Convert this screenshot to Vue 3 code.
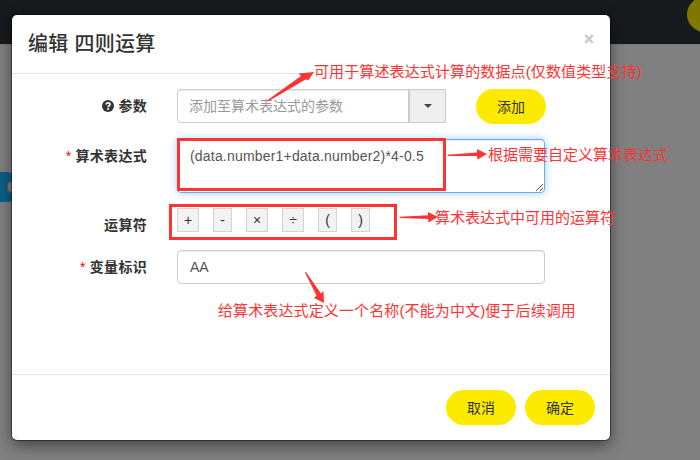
<script setup>
import { ref } from 'vue'

const expression = ref('(data.number1+data.number2)*4-0.5')
const identifier = ref('AA')
const operators = ['+', '-', '×', '÷', '(', ')']
</script>

<template>
  <div class="screen">
    <div class="topbar"><span class="round-action"></span></div>
    <div class="side-tab"><span class="side-hole"></span></div>

    <section class="modal">
      <header class="modal-header">
        <h4>编辑 四则运算</h4>
        <button class="close" aria-label="关闭">
          <svg width="10" height="10" viewBox="0 0 10 10"><path d="M1.2 1.2 8.8 8.8M8.8 1.2 1.2 8.8" /></svg>
        </button>
      </header>

      <div class="modal-body">
        <div class="row row-param">
          <label>
            <svg class="help" width="12" height="12" viewBox="0 0 12 12">
              <circle cx="6" cy="6" r="6" fill="#333" />
              <path d="M4 4.5C4.2 2.3 8 2.2 8 4.4 8 5.8 6.1 5.7 6.1 7.2" fill="none" stroke="#fff" stroke-width="1.7" />
              <rect x="5.2" y="8.2" width="1.8" height="1.7" fill="#fff" />
            </svg>参数
          </label>
          <div class="combo">
            <div class="combo-text">添加至算术表达式的参数</div>
            <button class="combo-toggle"><span class="caret"></span></button>
          </div>
          <button class="pill">添加</button>
        </div>

        <div class="row row-expr">
          <label><i>*</i>算术表达式</label>
          <div class="field area">
            {{ expression }}
            <svg class="grip" width="9" height="9" viewBox="0 0 9 9"><path d="M1 8 8 1M5 8 8 5" /></svg>
          </div>
        </div>

        <div class="row row-ops">
          <label>运算符</label>
          <div class="ops">
            <button v-for="op in operators" :key="op" :class="{ narrow: '-()'.includes(op) }">{{ op }}</button>
          </div>
        </div>

        <div class="row row-id">
          <label><i>*</i>变量标识</label>
          <div class="field">{{ identifier }}</div>
        </div>
      </div>

      <footer class="modal-footer">
        <button class="pill">取消</button>
        <button class="pill">确定</button>
      </footer>
    </section>

    <div class="mark mark-expr"></div>
    <div class="mark mark-ops"></div>
    <svg class="arrows" width="700" height="460" viewBox="0 0 700 460">
      <path d="M267 100.5 301 76 298.5 73.5 314 72 308.5 80 305.5 79.5 268 101.5Z" />
      <path d="M447.5 154.7 477 152.5 477 149 487 154 477.5 159.5 477 156 447.5 156Z" />
      <path d="M399.5 216.8 428 215.3 428 212 438 217 428.5 222.5 428 219 399.5 218Z" />
      <path d="M305 272.5 316.5 295.8 314 298 324 303 323.5 291 321 293.5 306 272Z" />
    </svg>
    <p class="note note-param">可用于算述表达式计算的数据点(仅数值类型支持)</p>
    <p class="note note-expr">根据需要自定义算术表达式</p>
    <p class="note note-ops">算术表达式中可用的运算符</p>
    <p class="note note-id">给算术表达式定义一个名称(不能为中文)便于后续调用</p>
  </div>
</template>

<style>
body {
  margin: 0;
  overflow: hidden;
}
</style>

<style scoped>
* {
  box-sizing: border-box;
}
.screen {
  position: relative;
  width: 700px;
  height: 460px;
  overflow: hidden;
  padding: 15px 0 0 12px;
  background: linear-gradient(#171a1d 44px, #777 44px, #777 45px, #808080 45px);
  font-family: "Liberation Sans", "Noto Sans CJK SC", sans-serif;
  font-size: 14px;
  line-height: 20px;
  color: #333;
}
.round-action {
  position: absolute;
  left: 687px;
  top: -3px;
  width: 70px;
  height: 35px;
  border-radius: 18px;
  background: #807700;
}
.side-tab {
  position: absolute;
  left: -10px;
  top: 172px;
  width: 22px;
  height: 30px;
  border-radius: 4px;
  background: #0b5f87;
}
.side-hole {
  position: absolute;
  right: -6px;
  top: 9px;
  width: 11px;
  height: 12px;
  border: 1px solid #555;
  border-radius: 4px;
  background: #808080;
}
.modal {
  position: relative;
  display: flex;
  flex-direction: column;
  width: 598px;
  height: 425px;
  border-radius: 5px;
  background: #fff;
  box-shadow: 0 0 0 1px rgba(0, 0, 0, 0.4), 0 5px 15px rgba(0, 0, 0, 0.5);
}
.modal-header {
  display: flex;
  justify-content: space-between;
  height: 59px;
  padding: 15px 16px;
  border-bottom: 1px solid #e5e5e5;
}
h4 {
  margin: 0;
  font-size: 20px;
  line-height: 29px;
  font-weight: 500;
  letter-spacing: 0.3px;
}
button {
  padding: 0;
  border: 0;
  background: none;
  color: inherit;
  font: inherit;
}
.close {
  display: flex;
  height: 10px;
  margin-top: 4px;
}
.close path {
  stroke: #ccc;
  stroke-width: 2.6;
}
.modal-body {
  flex: 1;
  padding-top: 15px;
}
.row {
  display: flex;
  align-items: flex-start;
}
.row-param {
  height: 50px;
}
.row-expr {
  height: 69px;
}
.row-ops {
  height: 42px;
}
label {
  width: 135px;
  margin-right: 30px;
  padding-top: 7px;
  text-align: right;
  font-weight: bold;
  white-space: nowrap;
  letter-spacing: 0.3px;
}
label i {
  margin-right: 4px;
  color: #f00;
  font-style: normal;
  font-weight: normal;
}
.help {
  margin-right: 4px;
  vertical-align: -1px;
}
.combo {
  display: flex;
  width: 269px;
  height: 34px;
  margin-right: 30px;
  border: 1px solid #ccc;
  border-radius: 4px 0 0 4px;
  box-shadow: inset 0 1px 1px rgba(0, 0, 0, 0.075);
}
.combo-text {
  flex: 1;
  padding: 6px 11px;
  color: #999;
}
.combo-toggle {
  display: flex;
  align-items: center;
  justify-content: center;
  width: 37px;
  border-left: 2px solid #ccc;
  background: #eee;
}
.caret {
  border: 4px solid transparent;
  border-top-color: #444;
  border-bottom: 0;
}
.pill {
  width: 70px;
  height: 35px;
  border-radius: 18px;
  background: #fcea00;
}
.field {
  position: relative;
  width: 368px;
  height: 34px;
  padding: 6px 12px;
  border: 1px solid #ccc;
  border-radius: 4px;
  color: #555;
  box-shadow: inset 0 1px 1px rgba(0, 0, 0, 0.075);
}
.area {
  height: 54px;
  border-color: #66afe9;
  letter-spacing: 0.19px;
  box-shadow: inset 0 1px 1px rgba(0, 0, 0, 0.075), 0 0 8px rgba(102, 175, 233, 0.6);
}
.grip {
  position: absolute;
  right: 0;
  bottom: 0;
}
.grip path {
  stroke: #555;
  stroke-width: 1;
}
.ops {
  display: flex;
  gap: 14px;
}
.ops button {
  width: 22px;
  height: 24px;
  border: 1px solid #d3d3d3;
  background: #f2f2f2;
}
.ops .narrow {
  width: 19px;
}
.modal-footer {
  display: flex;
  justify-content: flex-end;
  gap: 9px;
  height: 66px;
  padding: 15px;
  border-top: 1px solid #e5e5e5;
}
.mark {
  position: absolute;
  border: 3px solid #fe3434;
}
.mark-expr {
  left: 177px;
  top: 138px;
  width: 269px;
  height: 53px;
}
.mark-ops {
  left: 169px;
  top: 204px;
  width: 228px;
  height: 36px;
}
.arrows {
  position: absolute;
  left: 0;
  top: 0;
  fill: #fe3434;
}
.note {
  position: absolute;
  margin: 0;
  color: #fe3434;
  font-size: 15px;
  white-space: nowrap;
}
.note-param {
  left: 314px;
  top: 62px;
  letter-spacing: 0.12px;
}
.note-expr {
  left: 488px;
  top: 145px;
}
.note-ops {
  left: 435px;
  top: 208px;
}
.note-id {
  left: 218px;
  top: 301px;
  letter-spacing: 0.12px;
}
</style>
